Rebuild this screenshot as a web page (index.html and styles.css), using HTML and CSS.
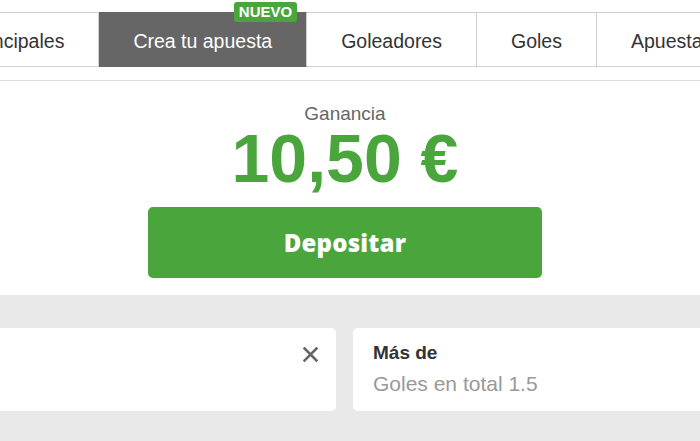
FILE: index.html
```html
<!DOCTYPE html>
<html lang="es">
<head>
<meta charset="utf-8">
<title>Crea tu apuesta</title>
<link rel="stylesheet" href="styles.css">
</head>
<body>
<div class="page">
  <nav class="tabs-wrap">
    <ul class="tabs">
      <li class="tab">Principales</li>
      <li class="tab active">Crea tu apuesta<span class="badge">NUEVO</span></li>
      <li class="tab">Goleadores</li>
      <li class="tab">Goles</li>
      <li class="tab">Apuestas especiales</li>
    </ul>
  </nav>
  <div class="divider"></div>
  <section class="summary">
    <div class="label">Ganancia</div>
    <div class="amount">10,50 €</div>
    <button class="deposit">Depositar</button>
  </section>
  <section class="selections">
    <div class="cards">
      <div class="card card-left">
        <svg class="close" width="15" height="15" viewBox="0 0 15 15" aria-hidden="true">
          <path d="M1.5 1.5 L13.5 13.5 M13.5 1.5 L1.5 13.5" stroke="#666" stroke-width="2.6" stroke-linecap="square" fill="none"/>
        </svg>
      </div>
      <div class="card">
        <div class="card-title">Más de</div>
        <div class="card-sub">Goles en total 1.5</div>
      </div>
    </div>
  </section>
</div>
</body>
</html>
```
FILE: styles.css
```css
* { box-sizing: border-box; }
html, body {
  margin: 0;
  padding: 0;
  background: #fff;
  font-family: "Liberation Sans", Arial, Helvetica, sans-serif;
  overflow: hidden;
}
.page {
  width: 700px;
  height: 441px;
  overflow: hidden;
}
.tabs-wrap {
  padding-top: 12px;
  overflow: hidden;
}
.tabs {
  list-style: none;
  margin: 0 0 0 -65px;
  padding: 0;
  display: flex;
}
.tab {
  position: relative;
  flex: 0 0 auto;
  white-space: nowrap;
  height: 55px;
  padding: 4px 34px 0;
  line-height: 49px;
  font-size: 19.5px;
  color: #333;
  border-top: 1px solid #cfcfcf;
  border-bottom: 1px solid #cfcfcf;
  border-right: 1px solid #cfcfcf;
}
.tab.active {
  background: #666;
  color: #fff;
  border-top-color: #666;
  border-bottom-color: #666;
}
.badge {
  position: absolute;
  top: -11px;
  right: 9px;
  height: 20px;
  padding: 0 5px;
  line-height: 20px;
  font-size: 15px;
  font-weight: 700;
  color: #fff;
  background: #4aa63c;
  border-radius: 3px;
}
.divider {
  margin-top: 13px;
  height: 1px;
  background: #dcdcdc;
}
.summary {
  width: 690px;
  padding: 23px 0 17px;
  display: flex;
  flex-direction: column;
  align-items: center;
}
.label {
  font-size: 19px;
  line-height: 20px;
  color: #666;
}
.amount {
  font-size: 68px;
  line-height: 68px;
  font-weight: 700;
  color: #4aa63c;
}
.deposit {
  margin-top: 15px;
  width: 394px;
  height: 71px;
  border: 0;
  border-radius: 5px;
  background: #4aa63c;
  color: #fff;
  font-family: "Open Sans", "DejaVu Sans", sans-serif;
  font-weight: 800;
  font-size: 24px;
  letter-spacing: 0.2px;
  padding: 0;
}
.selections {
  background: #e9e9e9;
  padding-top: 33px;
  height: 200px;
  overflow: hidden;
}
.cards {
  display: flex;
  gap: 17px;
  margin-left: -44px;
}
.card {
  flex: 0 0 380px;
  height: 83px;
  background: #fff;
  border-radius: 5px;
  padding: 14px 20px 0;
}
.card-left {
  display: flex;
  justify-content: flex-end;
  align-items: flex-start;
  padding: 19px 18px 0;
}
.close { display: block; }
.card-title {
  font-size: 19px;
  line-height: 22px;
  font-weight: 700;
  color: #333;
}
.card-sub {
  margin-top: 8px;
  font-size: 21px;
  line-height: 24px;
  color: #999;
}
```
